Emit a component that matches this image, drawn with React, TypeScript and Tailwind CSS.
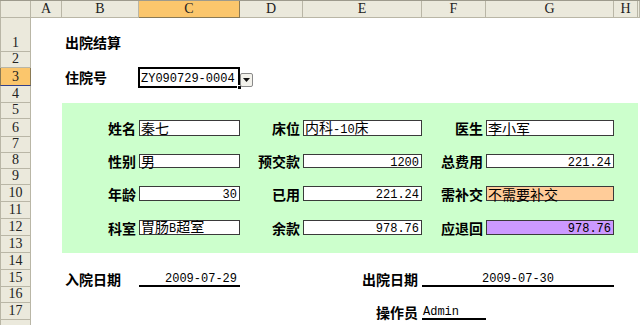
import React from 'react';

const W = {
  A: 'w-[31px]',
  B: 'w-[77px]',
  C: 'w-[101px]',
  D: 'w-[63px]',
  E: 'w-[119px]',
  F: 'w-[64px]',
  G: 'w-[128px]',
  H: 'w-[24px]',
  X: 'w-[2px]',
};

function Mixed({ text }: { text: string }) {
  const parts = text.split(/([\x00-\x7f]+)/).filter((p) => p.length > 0);
  return (
    <span className="whitespace-nowrap leading-[15px]">
      {parts.map((p, i) =>
        /^[\x00-\x7f]+$/.test(p) ? (
          <span key={i} className="font-['Liberation_Mono',monospace] text-[12px]">
            {p}
          </span>
        ) : (
          <span key={i} className="text-[14px]">
            {p}
          </span>
        )
      )}
    </span>
  );
}

function Row({
  h,
  num,
  sel,
  children,
}: {
  h: string;
  num?: number;
  sel?: boolean;
  children?: React.ReactNode;
}) {
  return (
    <div className={`flex ${h}`}>
      <div
        className={`w-[31px] shrink-0 flex items-end justify-center border-l border-r border-b font-['Liberation_Serif',serif] text-[14px] leading-[16px] text-[#222] ${
          sel ? 'bg-[#fbc66c] border-[#8a7a55] border-b-[#33408a]' : 'bg-[#ebe9dc] border-[#b9b6a6]'
        }`}
      >
        {num}
      </div>
      {children}
    </div>
  );
}

function Cell({ w, className = '', children }: { w: string; className?: string; children?: React.ReactNode }) {
  return <div className={`${w} shrink-0 flex ${className}`}>{children}</div>;
}

function Label({ w, text, className = '' }: { w: string; text: string; className?: string }) {
  return (
    <Cell w={w} className={`items-center justify-end pr-[3px] font-bold text-[14px] leading-none ${className}`}>
      {text}
    </Cell>
  );
}

function Box({
  w,
  text,
  right,
  bg = 'bg-white',
}: {
  w: string;
  text: string;
  right?: boolean;
  bg?: string;
}) {
  return (
    <Cell w={w} className="items-stretch py-[1px]">
      <div
        className={`flex-1 flex items-center border border-[#3a3a3a] ${bg} ${
          right ? 'justify-end pr-[2px]' : 'justify-start pl-[1px]'
        }`}
      >
        <Mixed text={text} />
      </div>
    </Cell>
  );
}

function GreenRow({ h, num, children }: { h: string; num: number; children?: React.ReactNode }) {
  return (
    <Row h={h} num={num}>
      <Cell w={W.A} />
      <div className="w-[576px] shrink-0 flex bg-[#ccffcc]">{children}</div>
    </Row>
  );
}

function FieldRow({
  h,
  num,
  l1,
  v1,
  r1,
  l2,
  v2,
  r2,
  l3,
  v3,
  r3,
  bg3,
}: {
  h: string;
  num: number;
  l1: string;
  v1: string;
  r1?: boolean;
  l2: string;
  v2: string;
  r2?: boolean;
  l3: string;
  v3: string;
  r3?: boolean;
  bg3?: string;
}) {
  return (
    <GreenRow h={h} num={num}>
      <Label w={W.B} text={l1} />
      <Box w={W.C} text={v1} right={r1} />
      <Label w={W.D} text={l2} />
      <Box w={W.E} text={v2} right={r2} />
      <Label w={W.F} text={l3} />
      <Box w={W.G} text={v3} right={r3} bg={bg3} />
      <Cell w={W.H} />
    </GreenRow>
  );
}

function ColHead({ w, label, sel }: { w: string; label: string; sel?: boolean }) {
  return (
    <div
      className={`${w} shrink-0 flex items-center justify-center border-r border-b ${
        sel ? 'bg-[#fbc66c] border-[#8a7a55]' : 'bg-[#ebe9dc] border-[#b9b6a6]'
      }`}
    >
      {label}
    </div>
  );
}

export default function App() {
  return (
    <div className="w-[640px] h-[325px] overflow-hidden bg-white text-black font-['Noto_Sans_CJK_SC',sans-serif]">
      {/* column headers */}
      <div className="flex h-[18px] border-t border-[#9d9a8c] font-['Liberation_Serif',serif] text-[14px] leading-none text-[#222]">
        <div className="w-[31px] shrink-0 bg-[#ebe9dc] border-l border-r border-b border-[#b9b6a6]" />
        <ColHead w={W.A} label="A" />
        <ColHead w={W.B} label="B" />
        <ColHead w={W.C} label="C" sel />
        <ColHead w={W.D} label="D" />
        <ColHead w={W.E} label="E" />
        <ColHead w={W.F} label="F" />
        <ColHead w={W.G} label="G" />
        <ColHead w={W.H} label="H" />
        <ColHead w={W.X} label="" />
      </div>

      {/* row 1 */}
      <Row h="h-[34px]" num={1}>
        <Cell w={W.A} />
        <Cell w="w-[178px]" className="items-end pl-[3px] pb-[1px] font-bold text-[14px] leading-[18px]">
          出院结算
        </Cell>
      </Row>
      <Row h="h-[16px]" num={2} />
      {/* row 3 */}
      <Row h="h-[18px]" num={3} sel>
        <Cell w={W.A} />
        <Cell w={W.B} className="items-center pl-[3px] font-bold text-[14px] leading-none">
          住院号
        </Cell>
        <Cell w={W.C} className="relative items-center pl-[2px]">
          <Mixed text="ZY090729-0004" />
          <div className="absolute left-[-1px] right-[0px] top-[-1px] bottom-[-2px] border-2 border-black" />
          <div className="absolute right-[-2px] bottom-[-4px] w-[5px] h-[5px] bg-black border border-white" />
          <div className="absolute left-[101px] top-[5px] w-[13px] h-[14px] bg-[#f3f2ec] border border-[#8a8a8a] rounded-[2px] flex items-center justify-center">
            <svg width="7" height="4" viewBox="0 0 7 4">
              <path d="M0 0 H7 L3.5 4 Z" fill="#111" />
            </svg>
          </div>
        </Cell>
      </Row>
      <Row h="h-[17px]" num={4} />
      <GreenRow h="h-[16px]" num={5} />
      <FieldRow
        h="h-[18px]"
        num={6}
        l1="姓名"
        v1="秦七"
        l2="床位"
        v2="内科-10床"
        l3="医生"
        v3="李小军"
      />
      <GreenRow h="h-[16px]" num={7} />
      <FieldRow
        h="h-[16px]"
        num={8}
        l1="性别"
        v1="男"
        l2="预交款"
        v2="1200"
        r2
        l3="总费用"
        v3="221.24"
        r3
      />
      <GreenRow h="h-[16px]" num={9} />
      <FieldRow
        h="h-[17px]"
        num={10}
        l1="年龄"
        v1="30"
        r1
        l2="已用"
        v2="221.24"
        r2
        l3="需补交"
        v3="不需要补交"
        bg3="bg-[#ffcc99]"
      />
      <GreenRow h="h-[17px]" num={11} />
      <FieldRow
        h="h-[17px]"
        num={12}
        l1="科室"
        v1="胃肠B超室"
        l2="余款"
        v2="978.76"
        r2
        l3="应退回"
        v3="978.76"
        r3
        bg3="bg-[#cc99ff]"
      />
      <GreenRow h="h-[17px]" num={13} />
      <Row h="h-[17px]" num={14} />
      {/* row 15 */}
      <Row h="h-[17px]" num={15}>
        <Cell w={W.A} />
        <Cell w={W.B} className="items-center pl-[3px] font-bold text-[14px] leading-none">
          入院日期
        </Cell>
        <Cell w={W.C} className="items-center justify-end pr-[3px] border-b-2 border-black">
          <Mixed text="2009-07-29" />
        </Cell>
        <Cell w={W.D} />
        <Label w={W.E} text="出院日期" className="pr-[4px]" />
        <Cell w="w-[192px]" className="items-center justify-center border-b-2 border-black">
          <Mixed text="2009-07-30" />
        </Cell>
      </Row>
      <Row h="h-[16px]" num={16} />
      {/* row 17 */}
      <Row h="h-[17px]" num={17}>
        <Cell w={W.A} />
        <Cell w={W.B} />
        <Cell w={W.C} />
        <Cell w={W.D} />
        <Label w={W.E} text="操作员" className="pr-[4px]" />
        <Cell w={W.F} className="items-center pl-[1px] border-b-2 border-black">
          <Mixed text="Admin" />
        </Cell>
      </Row>
      <Row h="h-[17px]" />
    </div>
  );
}
